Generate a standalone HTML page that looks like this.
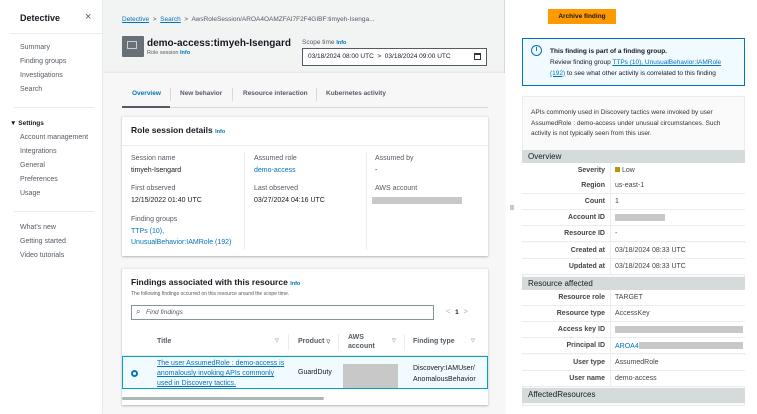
<!DOCTYPE html><html><head><meta charset="utf-8"><style>
*{box-sizing:border-box;margin:0;padding:0}
body{width:757px;height:414px;overflow:hidden;font-family:"Liberation Sans",sans-serif;font-size:7px;color:#16191f;background:#fff;position:relative}
.a{position:absolute;white-space:nowrap}
.l{color:#0073bb}.u{text-decoration:underline}
.b{font-weight:bold}
.g{color:#545b64}
.gray{background:#c8c8c8;position:absolute}
.card{position:absolute;background:#fff;box-shadow:0 1px 2px rgba(0,28,36,.3);border-top:1px solid #eaeded}
.row{position:absolute;left:522px;width:223px;height:16px;border-bottom:1px solid #eaeded;background:#fff;white-space:nowrap;overflow:hidden}
.row .k{position:absolute;right:140px;top:4px;font-weight:bold;color:#444;text-align:right}
.row .v{position:absolute;left:93px;top:4px;color:#444}
.row:after{content:"";position:absolute;left:88px;top:0;bottom:0;border-left:1px solid #eaeded}
.sec{position:absolute;left:522px;width:223px;height:13px;background:#d5dbdb;font-size:8px;padding:2px 6px}
</style></head><body>
<!-- sidebar -->
<div class="a" style="left:0;top:0;width:103px;height:414px;background:#fff;border-right:1px solid #eaeded"></div>
<div class="a b" style="left:20px;top:13px;font-size:9px">Detective</div>
<div class="a" style="left:85px;top:11px;font-size:11px;color:#545b64">×</div>
<div class="a" style="left:10px;top:33px;width:92px;border-top:1px solid #eaeded"></div>
<div class="a g" style="left:20px;top:44px">Summary</div>
<div class="a g" style="left:20px;top:58px">Finding groups</div>
<div class="a g" style="left:20px;top:72px">Investigations</div>
<div class="a g" style="left:20px;top:86px">Search</div>
<div class="a" style="left:14px;top:107px;width:80px;border-top:1px solid #eaeded"></div>
<div class="a b" style="left:10px;top:120px;font-size:6.5px">▼ Settings</div>
<div class="a g" style="left:20px;top:134px">Account management</div>
<div class="a g" style="left:20px;top:148px">Integrations</div>
<div class="a g" style="left:20px;top:162px">General</div>
<div class="a g" style="left:20px;top:176px">Preferences</div>
<div class="a g" style="left:20px;top:190px">Usage</div>
<div class="a" style="left:14px;top:211px;width:80px;border-top:1px solid #eaeded"></div>
<div class="a g" style="left:20px;top:224px">What's new</div>
<div class="a g" style="left:20px;top:238px">Getting started</div>
<div class="a g" style="left:20px;top:252px">Video tutorials</div>
<!-- main -->
<div class="a" style="left:103px;top:0;width:402px;height:414px;background:#f2f3f3;border-right:1px solid #d5dbdb"></div>
<div class="a" style="left:103px;top:73px;width:402px;height:341px;background:#f7f7f7;box-shadow:0 -1px 2px rgba(0,0,0,.06)"></div>
<div class="a" style="left:122px;top:16px;font-size:6.5px"><span class="l u">Detective</span> <span class="g">&nbsp;&gt;&nbsp;</span> <span class="l u">Search</span> <span class="g">&nbsp;&gt;&nbsp;</span> <span class="g">AwsRoleSession/AROA4OAMZFAI7F2F4GIBF:timyeh-Isenga...</span></div>
<div class="a" style="left:122px;top:36px;width:22px;height:21px;background:#687078;border-radius:1px"><div style="position:absolute;left:5px;top:5px;width:10px;height:8px;border:1px solid #c9ced2"></div></div>
<div class="a b" style="left:147px;top:38px;font-size:10px">demo-access:timyeh-Isengard</div>
<div class="a g" style="left:147px;top:50px;font-size:5.5px">Role session <span class="l b">Info</span></div>
<div class="a g" style="left:302px;top:39px;font-size:6.5px">Scope time <span class="l b" style="font-size:5.5px">Info</span></div>
<div class="a" style="left:302px;top:48px;width:185px;height:18px;border:1px solid #545b64;background:#fff;font-size:6.5px;padding:4px 5px">03/18/2024 08:00 UTC &nbsp;&gt;&nbsp; 03/18/2024 09:00 UTC<span style="position:absolute;right:5px;top:4px;width:7px;height:7px;border:1px solid #333;border-top-width:2px"></span></div>
<!-- tabs -->
<div class="a" style="left:122px;top:107px;width:366px;border-top:1px solid #d5dbdb"></div>
<div class="a" style="left:122px;top:106px;width:48px;border-top:2px solid #545b64"></div>
<div class="a b l" style="left:132px;top:90px;font-size:6.5px">Overview</div>
<div class="a" style="left:170px;top:88px;height:13px;border-left:1px solid #d5dbdb"></div>
<div class="a b g" style="left:180px;top:90px;font-size:6.5px">New behavior</div>
<div class="a" style="left:232px;top:88px;height:13px;border-left:1px solid #d5dbdb"></div>
<div class="a b g" style="left:243px;top:90px;font-size:6.5px">Resource interaction</div>
<div class="a" style="left:316px;top:88px;height:13px;border-left:1px solid #d5dbdb"></div>
<div class="a b g" style="left:326px;top:90px;font-size:6.5px">Kubernetes activity</div>
<!-- role session card -->
<div class="card" style="left:122px;top:116px;width:366px;height:140px"></div>
<div class="a" style="left:122px;top:145px;width:366px;border-top:1px solid #eaeded"></div>
<div class="a b" style="left:131px;top:125px;font-size:8.5px">Role session details <span class="l" style="font-size:5.5px">Info</span></div>
<div class="a" style="left:244px;top:152px;height:98px;border-left:1px solid #eaeded"></div>
<div class="a" style="left:366px;top:152px;height:98px;border-left:1px solid #eaeded"></div>
<div class="a g" style="left:131px;top:155px">Session name</div><div class="a" style="left:131px;top:167px">timyeh-Isengard</div>
<div class="a g" style="left:131px;top:185px">First observed</div><div class="a" style="left:131px;top:197px">12/15/2022 01:40 UTC</div>
<div class="a g" style="left:131px;top:216px">Finding groups</div><div class="a l" style="left:131px;top:228px">TTPs (10),</div><div class="a l" style="left:131px;top:239px">UnusualBehavior:IAMRole (192)</div>
<div class="a g" style="left:254px;top:155px">Assumed role</div><div class="a l" style="left:254px;top:167px">demo-access</div>
<div class="a g" style="left:254px;top:185px">Last observed</div><div class="a" style="left:254px;top:197px">03/27/2024 04:16 UTC</div>
<div class="a g" style="left:375px;top:155px">Assumed by</div><div class="a" style="left:375px;top:167px">-</div>
<div class="a g" style="left:375px;top:185px">AWS account</div><div class="gray" style="left:372px;top:197px;width:90px;height:7px"></div>
<!-- findings card -->
<div class="card" style="left:122px;top:268px;width:366px;height:137px"></div>
<div class="a b" style="left:131px;top:277px;font-size:8.5px">Findings associated with this resource <span class="l" style="font-size:5.5px">Info</span></div>
<div class="a g" style="left:131px;top:291px;font-size:5px">The following findings occurred on this resource around the scope time.</div>
<div class="a" style="left:131px;top:305px;width:303px;height:15px;border:1px solid #879596;background:#fff"></div>
<div class="a g" style="left:136px;top:307px;font-size:8px">⌕</div>
<div class="a g" style="left:146px;top:309px;font-style:italic;font-size:6.5px">Find findings</div>
<div class="a" style="left:446px;top:307px;font-size:8px;color:#aab7b8">&lt;&nbsp;&nbsp;<b style="color:#16191f;font-size:6.5px">1</b>&nbsp;&nbsp;&gt;</div>
<div class="a" style="left:122px;top:328px;width:366px;height:28px;background:#fff;border-bottom:1px solid #eaeded"></div>
<div class="a b g" style="left:157px;top:338px">Title</div><div class="a g" style="left:275px;top:338px;font-size:5px">▽</div>
<div class="a" style="left:288px;top:334px;height:16px;border-left:1px solid #eaeded"></div>
<div class="a b g" style="left:298px;top:338px">Product <span style="font-size:5px">▽</span></div>
<div class="a" style="left:338px;top:334px;height:16px;border-left:1px solid #eaeded"></div>
<div class="a b g" style="left:348px;top:333px;line-height:9px">AWS<br>account</div><div class="a g" style="left:392px;top:338px;font-size:5px">▽</div>
<div class="a" style="left:404px;top:334px;height:16px;border-left:1px solid #eaeded"></div>
<div class="a b g" style="left:413px;top:338px">Finding type</div><div class="a g" style="left:471px;top:338px;font-size:5px">▽</div>
<div class="a" style="left:122px;top:356px;width:366px;height:33px;background:#f1faff;border:1px solid #00a1c9"></div>
<div class="a" style="left:131px;top:370px;width:7px;height:7px;border-radius:50%;border:2px solid #0073bb;background:#fff"></div>
<div class="a l u" style="left:157px;top:359px;line-height:10px">The user AssumedRole : demo-access is<br>anomalously invoking APIs commonly<br>used in Discovery tactics.</div>
<div class="a" style="left:298px;top:369px">GuardDuty</div>
<div class="gray" style="left:343px;top:364px;width:55px;height:24px"></div>
<div class="a" style="left:413px;top:364px;line-height:10.5px">Discovery:IAMUser/<br>AnomalousBehavior</div>
<div class="a" style="left:122px;top:397px;width:202px;height:3px;background:#aab7b8;border-radius:2px"></div>
<!-- right -->
<div class="a" style="left:510px;top:205px;font-size:7px;color:#545b64">II</div>
<div class="a b" style="left:548px;top:9px;width:68px;height:15px;background:#ff9900;font-size:6.5px;text-align:center;padding-top:4px">Archive finding</div>
<div class="a" style="left:522px;top:38px;width:223px;height:48px;background:#f1faff;border:1px solid #0073bb"></div>
<div class="a" style="left:531px;top:45px;width:11px;height:11px;border-radius:50%;border:1.5px solid #0073bb;color:#0073bb;font-size:7px;font-weight:bold;text-align:center;line-height:8px">i</div>
<div class="a b" style="left:550px;top:48px;font-size:6.5px">This finding is part of a finding group.</div>
<div class="a" style="left:550px;top:58px;font-size:6.5px;line-height:10.5px">Review finding group <span class="l u">TTPs (10), UnusualBehavior:IAMRole</span><br><span class="l u">(192)</span> to see what other activity is correlated to this finding</div>
<div class="a" style="left:522px;top:96px;width:223px;height:310px;background:#fafafa;border:1px solid #eaeded"></div>
<div class="a" style="left:531px;top:108px;font-size:6.5px;line-height:10.5px;color:#333">APIs commonly used in Discovery tactics were invoked by user<br>AssumedRole : demo-access under unusual circumstances. Such<br>activity is not typically seen from this user.</div>
<div class="sec" style="top:150px">Overview</div>
<div class="row" style="top:163px"><span class="k">Severity</span><span class="v"><span style="display:inline-block;width:5px;height:5px;background:#b7950b"></span> Low</span></div>
<div class="row" style="top:178px"><span class="k">Region</span><span class="v">us-east-1</span></div>
<div class="row" style="top:194px"><span class="k">Count</span><span class="v">1</span></div>
<div class="row" style="top:210px"><span class="k">Account ID</span><span class="v"><span style="display:inline-block;width:50px;height:7px;background:#c8c8c8"></span></span></div>
<div class="row" style="top:226px"><span class="k">Resource ID</span><span class="v">-</span></div>
<div class="row" style="top:243px"><span class="k">Created at</span><span class="v">03/18/2024 08:33 UTC</span></div>
<div class="row" style="top:259px"><span class="k">Updated at</span><span class="v">03/18/2024 08:33 UTC</span></div>
<div class="sec" style="top:277px">Resource affected</div>
<div class="row" style="top:290px"><span class="k">Resource role</span><span class="v">TARGET</span></div>
<div class="row" style="top:306px"><span class="k">Resource type</span><span class="v">AccessKey</span></div>
<div class="row" style="top:322px"><span class="k">Access key ID</span><span class="v"><span style="display:inline-block;width:128px;height:7px;background:#c8c8c8"></span></span></div>
<div class="row" style="top:338px"><span class="k">Principal ID</span><span class="v"><span class="l">AROA4</span><span style="display:inline-block;width:104px;height:7px;background:#c8c8c8;vertical-align:-1px"></span></span></div>
<div class="row" style="top:355px"><span class="k">User type</span><span class="v">AssumedRole</span></div>
<div class="row" style="top:371px"><span class="k">User name</span><span class="v">demo-access</span></div>
<div class="sec" style="top:388px;height:15px">AffectedResources</div>
</body></html>
